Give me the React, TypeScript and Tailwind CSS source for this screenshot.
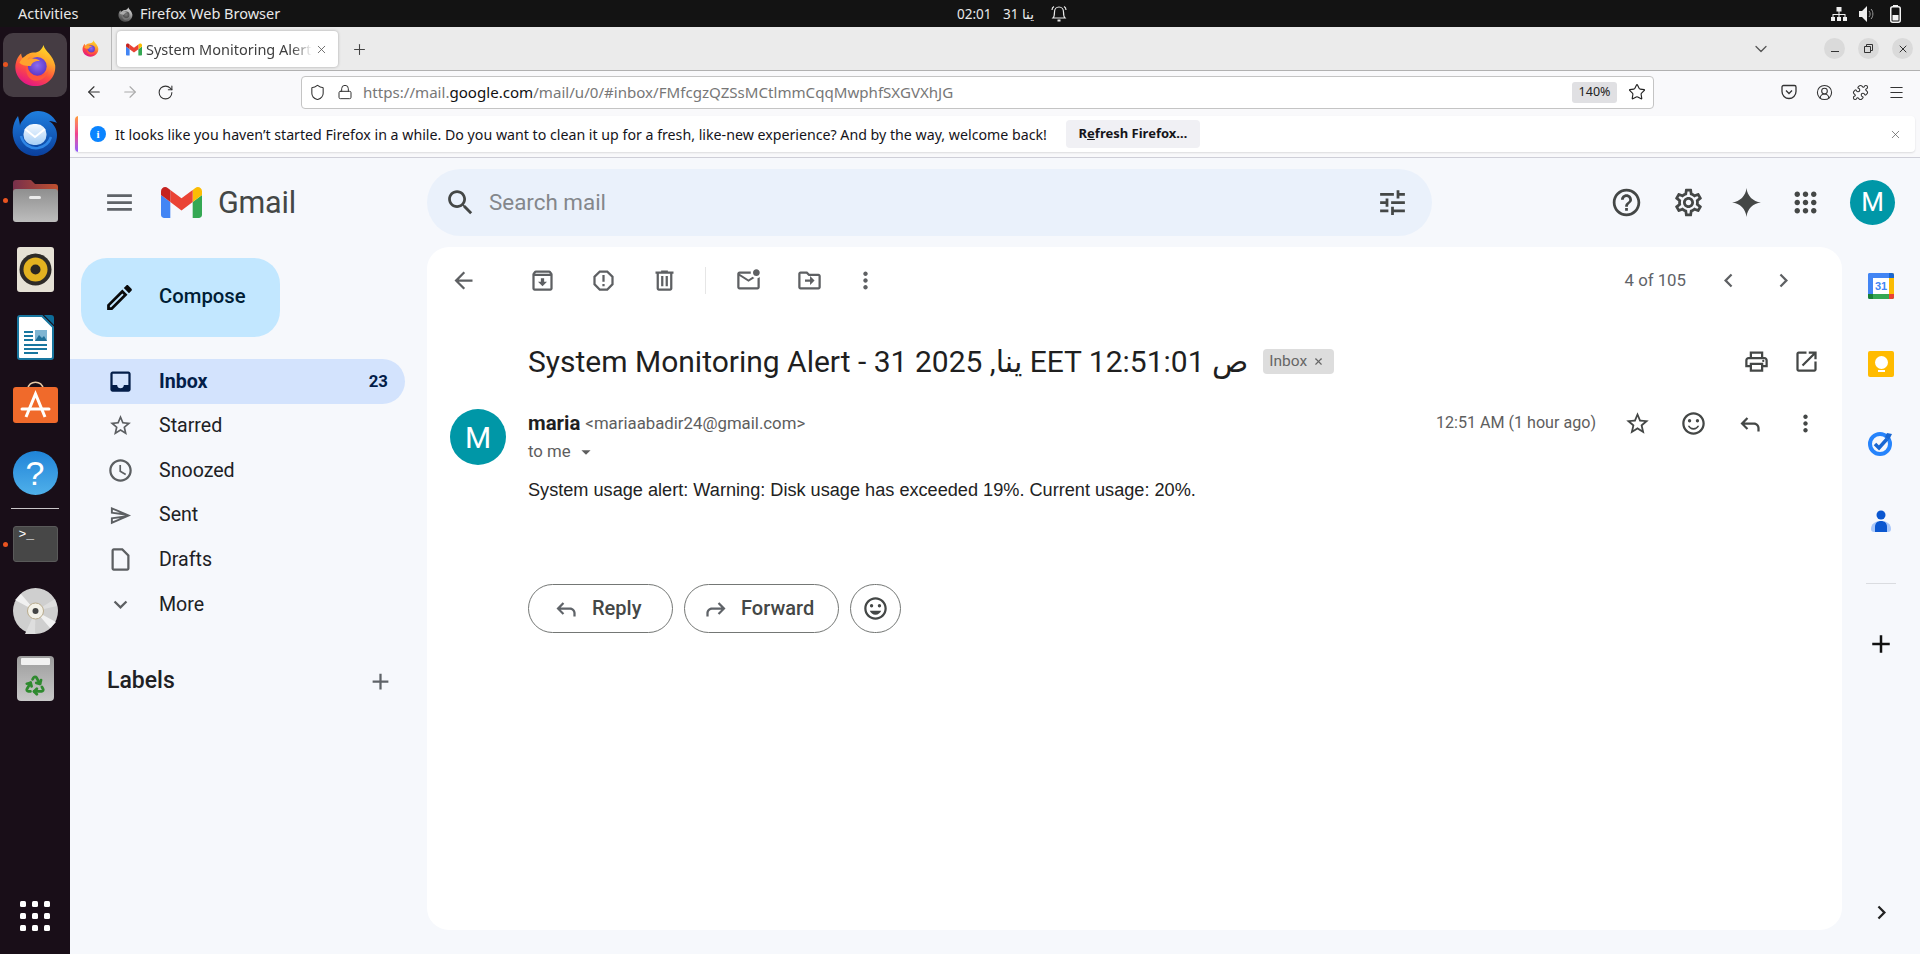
import React from "react";
import { ArrowLeft, ArrowRight, RotateCw, Shield, Lock, Star, CircleUserRound, Puzzle, Menu, X, Plus, ChevronDown, Recycle } from "lucide-react";

const P: Record<string, React.ReactNode> = {
  menu: <path d="M3 18h18v-2H3v2zm0-5h18v-2H3v2zm0-7v2h18V6H3z" />,
  search: <path d="M15.5 14h-.79l-.28-.27C15.41 12.59 16 11.11 16 9.5 16 5.91 13.09 3 9.5 3S3 5.91 3 9.5 5.91 16 9.5 16c1.61 0 3.09-.59 4.23-1.57l.27.28v.79l5 4.99L20.49 19l-4.99-5zm-6 0C7.01 14 5 11.99 5 9.5S7.01 5 9.5 5 14 7.01 14 9.5 11.99 14 9.5 14z" />,
  tune: <path d="M3 17v2h6v-2H3zM3 5v2h10V5H3zm10 16v-2h8v-2h-8v-2h-2v6h2zM7 9v2H3v2h4v2h2V9H7zm14 4v-2H11v2h10zm-6-4h2V7h4V5h-4V3h-2v6z" />,
  help: <path d="M11 18h2v-2h-2v2zm1-16C6.48 2 2 6.48 2 12s4.48 10 10 10 10-4.48 10-10S17.52 2 12 2zm0 18c-4.41 0-8-3.59-8-8s3.59-8 8-8 8 3.59 8 8-3.59 8-8 8zm0-14c-2.21 0-4 1.79-4 4h2c0-1.1.9-2 2-2s2 .9 2 2c0 2-3 1.75-3 5h2c0-2.25 3-2.5 3-5 0-2.21-1.79-4-4-4z" />,
  settings: <path d="M19.43 12.98c.04-.32.07-.64.07-.98 0-.34-.03-.66-.07-.98l2.11-1.65c.19-.15.24-.42.12-.64l-2-3.46c-.09-.16-.26-.25-.44-.25-.06 0-.12.01-.17.03l-2.49 1c-.52-.4-1.08-.73-1.69-.98l-.38-2.65C14.46 2.18 14.25 2 14 2h-4c-.25 0-.46.18-.49.42l-.38 2.65c-.61.25-1.17.59-1.69.98l-2.49-1c-.06-.02-.12-.03-.18-.03-.17 0-.34.09-.43.25l-2 3.46c-.13.22-.07.49.12.64l2.11 1.65c-.04.32-.07.65-.07.98 0 .33.03.66.07.98l-2.11 1.65c-.19.15-.24.42-.12.64l2 3.46c.09.16.26.25.44.25.06 0 .12-.01.17-.03l2.49-1c.52.4 1.08.73 1.69.98l.38 2.65c.03.24.24.42.49.42h4c.25 0 .46-.18.49-.42l.38-2.65c.61-.25 1.17-.59 1.69-.98l2.49 1c.06.02.12.03.18.03.17 0 .34-.09.43-.25l2-3.46c.12-.22.07-.49-.12-.64l-2.11-1.65zm-1.98-1.71c.04.31.05.52.05.73 0 .21-.02.43-.05.73l-.14 1.13.89.7 1.08.84-.7 1.21-1.27-.51-1.04-.42-.9.68c-.43.32-.84.56-1.25.73l-1.06.43-.16 1.13-.2 1.35h-1.4l-.19-1.35-.16-1.13-1.06-.43c-.43-.18-.83-.41-1.23-.71l-.91-.7-1.06.43-1.27.51-.7-1.21 1.08-.84.89-.7-.14-1.13c-.03-.31-.05-.54-.05-.74s.02-.43.05-.73l.14-1.13-.89-.7-1.08-.84.7-1.21 1.27.51 1.04.42.9-.68c.43-.32.84-.56 1.25-.73l1.06-.43.16-1.13.2-1.35h1.39l.19 1.35.16 1.13 1.06.43c.43.18.83.41 1.23.71l.91.7 1.06-.43 1.27-.51.7 1.21-1.07.85-.89.7.14 1.13zM12 8c-2.21 0-4 1.79-4 4s1.79 4 4 4 4-1.79 4-4-1.79-4-4-4zm0 6c-1.1 0-2-.9-2-2s.9-2 2-2 2 .9 2 2-.9 2-2 2z" />,
  spark: <path d="M12 1.5c.6 5.8 4.7 9.9 10.5 10.5-5.8.6-9.9 4.7-10.5 10.5C11.4 16.7 7.3 12.600 1.500 12 7.300 11.400 11.400 7.300 12 1.500z" />,
  apps: <path d="M6 8c1.100 0 2-.9 2-2s-.9-2-2-2-2 .9-2 2 .9 2 2 2zm6 12c1.100 0 2-.9 2-2s-.9-2-2-2-2 .9-2 2 .9 2 2 2zm-6 0c1.100 0 2-.9 2-2s-.9-2-2-2-2 .9-2 2 .9 2 2 2zm0-6c1.100 0 2-.9 2-2s-.9-2-2-2-2 .9-2 2 .9 2 2 2zm6 0c1.100 0 2-.9 2-2s-.9-2-2-2-2 .9-2 2 .9 2 2 2zm4-8c0 1.100.9 2 2 2s2-.9 2-2-.9-2-2-2-2 .9-2 2zm-4 2c1.100 0 2-.9 2-2s-.9-2-2-2-2 .9-2 2 .9 2 2 2zm6 6c1.100 0 2-.9 2-2s-.9-2-2-2-2 .9-2 2 .9 2 2 2zm0 6c1.100 0 2-.9 2-2s-.9-2-2-2-2 .9-2 2 .9 2 2 2z" />,
  back: <path d="M20 11H7.830l5.590-5.590L12 4l-8 8 8 8 1.410-1.410L7.830 13H20v-2z" />,
  archive: <path d="M20.540 5.230l-1.390-1.680C18.880 3.210 18.470 3 18 3H6c-.47 0-.88.21-1.160.55L3.460 5.230C3.170 5.570 3 6.020 3 6.500V19c0 1.100.9 2 2 2h14c1.100 0 2-.9 2-2V6.500c0-.48-.17-.93-.46-1.270zM6.240 5h11.520l.81.97H5.440l.8-.97zM5 19V8h14v11H5zm8.450-9h-2.900v3H8l4 4 4-4h-2.550z" />,
  report: <path d="M15.730 3H8.270L3 8.270v7.460L8.270 21h7.460L21 15.730V8.270L15.730 3zM19 14.900L14.900 19H9.100L5 14.900V9.100L9.100 5h5.800L19 9.100v5.800zM11 7h2v6h-2zM11 15h2v2h-2z" />,
  trash: <path d="M15 4V3H9v1H4v2h1v13c0 1.100.9 2 2 2h10c1.100 0 2-.9 2-2V6h1V4h-5zm2 15H7V6h10v13zM9 8h2v9H9zm4 0h2v9h-2z" />,
  unread: <path d="M22 8.980V18c0 1.100-.9 2-2 2H4c-1.100 0-2-.9-2-2V6c0-1.100.9-2 2-2h10.100c-.06.32-.1.66-.1 1s.04.68.1 1H4l8 5 3.670-2.290c.47.43 1.020.76 1.630.98L12 13 4 8v10h16V9.900c.74-.15 1.420-.48 2-.92zM16 5c0 1.660 1.340 3 3 3s3-1.340 3-3-1.340-3-3-3-3 1.340-3 3z" />,
  move: <path d="M20 6h-8l-2-2H4c-1.100 0-1.990.9-1.990 2L2 18c0 1.100.9 2 2 2h16c1.100 0 2-.9 2-2V8c0-1.100-.9-2-2-2zm0 12H4V6h5.170l2 2H20v10zm-7.500-2l4-4-4-4v3H8v2h4.500v3z" />,
  more: <path d="M12 8c1.100 0 2-.9 2-2s-.9-2-2-2-2 .9-2 2 .9 2 2 2zm0 2c-1.100 0-2 .9-2 2s.9 2 2 2 2-.9 2-2-.9-2-2-2zm0 6c-1.100 0-2 .9-2 2s.9 2 2 2 2-.9 2-2-.9-2-2-2z" />,
  prev: <path d="M15.410 7.410L14 6l-6 6 6 6 1.410-1.410L10.830 12z" />,
  next: <path d="M10 6L8.590 7.410 13.170 12l-4.580 4.590L10 18l6-6z" />,
  print: <path d="M19 8h-1V3H6v5H5c-1.660 0-3 1.340-3 3v6h4v4h12v-4h4v-6c0-1.660-1.340-3-3-3zM8 5h8v3H8V5zm8 14H8v-4h8v4zm4-4h-2v-2H6v2H4v-4c0-.55.45-1 1-1h14c.55 0 1 .45 1 1v4zM18 10.500a1 1 0 1 1 0 2 1 1 0 0 1 0-2z" />,
  open: <path d="M19 19H5V5h7V3H5c-1.110 0-2 .9-2 2v14c0 1.100.89 2 2 2h14c1.100 0 2-.9 2-2v-7h-2v7zM14 3v2h3.590l-9.830 9.830 1.410 1.410L19 6.410V10h2V3h-7z" />,
  star: <path d="M22 9.240l-7.190-.62L12 2 9.190 8.630 2 9.240l5.460 4.730L5.820 21 12 17.270 18.180 21l-1.630-7.030L22 9.240zM12 15.400l-3.760 2.270 1-4.280-3.320-2.880 4.380-.38L12 6.100l1.710 4.040 4.380.38-3.320 2.880 1 4.280L12 15.400z" />,
  smile: <path d="M11.990 2C6.470 2 2 6.480 2 12s4.470 10 9.990 10C17.520 22 22 17.520 22 12S17.520 2 11.990 2zM12 20c-4.420 0-8-3.580-8-8s3.580-8 8-8 8 3.580 8 8-3.580 8-8 8zM8.500 8a1.500 1.500 0 1 1 0 3 1.500 1.500 0 0 1 0-3zm7 0a1.500 1.500 0 1 1 0 3 1.500 1.500 0 0 1 0-3zM12 16c-1.500 0-2.800-.8-3.500-2H6.900c.8 2.100 2.800 3.500 5.100 3.500s4.300-1.400 5.100-3.500h-1.600c-.7 1.200-2 2-3.500 2z" />,
  smileFill: <path d="M11.990 2C6.470 2 2 6.480 2 12s4.470 10 9.990 10C17.520 22 22 17.520 22 12S17.520 2 11.990 2zM12 20c-4.420 0-8-3.580-8-8s3.580-8 8-8 8 3.580 8 8-3.580 8-8 8zM8.500 8a1.500 1.500 0 1 1 0 3 1.500 1.500 0 0 1 0-3zm7 0a1.500 1.500 0 1 1 0 3 1.500 1.500 0 0 1 0-3zM12 17.500c2.330 0 4.300-1.460 5.110-3.500H6.890c.8 2.040 2.780 3.500 5.110 3.500z" />,
  reply: <path d="M9.500 6.400L4 12l5.500 5.600 1.400-1.400L7.700 13H16c1.650 0 3 1.350 3 3v3h2v-3c0-2.760-2.240-5-5-5H7.700l3.200-3.200z" />,
  forward: <path d="M14.500 6.400L20 12l-5.500 5.600-1.400-1.400 3.200-3.200H8c-1.650 0-3 1.350-3 3v3H3v-3c0-2.760 2.240-5 5-5h8.300l-3.200-3.200z" />,
  clock: <path d="M11.990 2C6.470 2 2 6.480 2 12s4.470 10 9.990 10C17.520 22 22 17.520 22 12S17.520 2 11.990 2zM12 20c-4.420 0-8-3.580-8-8s3.580-8 8-8 8 3.580 8 8-3.580 8-8 8zM12.500 7H11v6l5.250 3.150.75-1.230-4.500-2.670z" />,
  send: <path d="M4.010 6.030l7.510 3.220-7.520-1 .01-2.220m7.500 8.720L4 17.970v-2.220l7.510-1M2.010 3L2 10l15 2-15 2 .01 7L23 12 2.010 3z" />,
  draft: <path d="M14 2H6c-1.100 0-2 .9-2 2v16c0 1.100.9 2 2 2h12c1.100 0 2-.9 2-2V8l-6-6zm4 18H6V4h7.170L18 8.830V20z" />,
  expand: <path d="M16.590 8.590L12 13.170 7.410 8.590 6 10l6 6 6-6z" />,
  plus: <path d="M19 13h-6v6h-2v-6H5v-2h6V5h2v6h6v2z" />,
  inbox: <path d="M19 3H5c-1.100 0-2 .9-2 2v14c0 1.100.9 2 2 2h14c1.100 0 2-.9 2-2V5c0-1.100-.9-2-2-2zm0 12h-4c0 1.660-1.350 3-3 3s-3-1.340-3-3H5V5h14v10z" />,
  pencil: <path d="M3 17.250V21h3.750L17.810 9.940l-3.750-3.750L3 17.250zM5.920 19H5v-.92l9.060-9.060.92.92L5.920 19zM20.710 5.630l-2.340-2.340c-.39-.39-1.020-.39-1.410 0l-1.830 1.830 3.750 3.750 1.830-1.830c.39-.39.39-1.020 0-1.410z" />,
  caret: <path d="M7 10l5 5 5-5z" />,
};

function I({ n, s = 27, c = "#444746", cls = "" }: { n: string; s?: number; c?: string; cls?: string }) {
  return (
    <svg width={s} height={s} viewBox="0 0 24 24" fill={c} className={"shrink-0 block " + cls}>
      {P[n]}
    </svg>
  );
}

function GmailLogo({ w = 41, h = 31 }: { w?: number; h?: number }) {
  return (
    <svg width={w} height={h} viewBox="52 42 88 66" className="shrink-0 block">
      <path fill="#4285f4" d="M58 108h14V74L52 59v43c0 3.320 2.690 6 6 6" />
      <path fill="#34a853" d="M120 108h14c3.320 0 6-2.690 6-6V59l-20 15" />
      <path fill="#fbbc04" d="M120 48v26l20-15v-8c0-7.420-8.470-11.650-14.400-7.200" />
      <path fill="#ea4335" d="M72 74V48l24 18 24-18v26L96 92" />
      <path fill="#c5221f" d="M52 51v8l20 15V48l-5.600-4.200c-5.940-4.450-14.400-.22-14.400 7.200" />
    </svg>
  );
}

function FirefoxLogo({ s = 42, id = "a", cls = "" }: { s?: number; id?: string; cls?: string }) {
  return (
    <svg width={s} height={s} viewBox="0 0 48 48" className={"shrink-0 block " + cls}>
      <defs>
        <linearGradient id={id + "f"} x1="0.8" y1="0" x2="0.35" y2="1">
          <stop offset="0" stopColor="#ffe226" />
          <stop offset="0.35" stopColor="#ffa52c" />
          <stop offset="0.65" stopColor="#ff4f3e" />
          <stop offset="1" stopColor="#e31587" />
        </linearGradient>
        <radialGradient id={id + "p"} cx="0.5" cy="0.45" r="0.6">
          <stop offset="0" stopColor="#8c6cf0" />
          <stop offset="1" stopColor="#5a33c4" />
        </radialGradient>
      </defs>
      <path fill={"url(#" + id + "f)"} d="M33 1C34 8 44 12 46 24C47 37 37 47 24 47C11 47 1.500 37 1.500 26C1.500 20 4 14 8 10.500C8 13 9 15 10.500 16.500C13 11.500 18 9.500 23 9.500C27 9.500 31 6.500 33 1Z" />
      <circle cx="26" cy="25" r="10.500" fill={"url(#" + id + "p)"} />
      <path fill="#ffa22e" d="M6 21C9 14.500 15 11 22 12C18.500 13 16 15 15 17.500C19 15.500 25 16 29 19C24 18.500 20 20.500 19 24.500C14 25 9 24 6 21Z" />
      <path fill="#ff5a3c" d="M14 24C16 31 21 36 28 36C33 36 37 33 38.500 29C37 37 31 41 24.500 41C17 41 12 33 14 24Z" opacity="0.9" />
    </svg>
  );
}

function Thunderbird() {
  return (
    <svg width="48" height="46" viewBox="0 0 48 46" className="block">
      <defs>
        <linearGradient id="tb" x1="0.5" y1="0" x2="0.5" y2="1">
          <stop offset="0" stopColor="#1f7fe0" />
          <stop offset="1" stopColor="#0a3f9c" />
        </linearGradient>
        <linearGradient id="te" x1="0.5" y1="0" x2="0.5" y2="1">
          <stop offset="0" stopColor="#f4f9ff" />
          <stop offset="1" stopColor="#a8cff5" />
        </linearGradient>
      </defs>
      <path fill="url(#tb)" d="M7 6C1 14 0 24 4 33c4 8 12 13 20 13 12 0 22-9 22-21 0-6-3-11-8-14 3 0 6 1 8 2-4-8-11-12-19-12-7 0-12 4-15 9-2 2-3 4-3 6C9 14 8 10 7 6Z" />
      <path d="M10 26c2 8 9 13 17 12 6-1 11-5 13-11" fill="none" stroke="#2f86e6" strokeWidth="2.500" />
      <rect x="12.500" y="14" width="23" height="21" rx="10" fill="url(#te)" />
      <path d="M14 19l10 8 10-8" fill="none" stroke="#ffffff" strokeWidth="2" />
    </svg>
  );
}

function Folder() {
  return (
    <svg width="45" height="42" viewBox="0 0 45 42" className="block">
      <defs>
        <linearGradient id="fd" x1="0" y1="0" x2="1" y2="0">
          <stop offset="0" stopColor="#77304c" />
          <stop offset="1" stopColor="#c0502f" />
        </linearGradient>
        <linearGradient id="fb" x1="0" y1="0" x2="0" y2="1">
          <stop offset="0" stopColor="#8f8f8f" />
          <stop offset="1" stopColor="#bdbdbd" />
        </linearGradient>
      </defs>
      <path fill="url(#fd)" d="M0 3a3 3 0 0 1 3-3h15l4 4h20a3 3 0 0 1 3 3v8H0Z" />
      <rect x="0" y="9" width="45" height="33" rx="3" fill="url(#fb)" />
      <rect x="16" y="16" width="12" height="3" rx="1.500" fill="#ececec" />
    </svg>
  );
}

function Rhythmbox() {
  return (
    <svg width="37" height="45" viewBox="0 0 37 45" className="block">
      <rect width="37" height="45" rx="3" fill="#e6e1d5" />
      <circle cx="18.500" cy="22.500" r="16" fill="#2e2b28" />
      <circle cx="18.500" cy="22.500" r="12" fill="#e3b220" />
      <circle cx="18.500" cy="22.500" r="5" fill="#2a2622" />
    </svg>
  );
}

function Writer() {
  return (
    <svg width="37" height="45" viewBox="0 0 37 45" className="block">
      <path fill="#0e6c99" d="M27 0h7a3 3 0 0 1 3 3v7Z" />
      <path fill="#fff" stroke="#18769f" strokeWidth="2" d="M1 3a2 2 0 0 1 2-2h22l11 11v30a2 2 0 0 1-2 2H3a2 2 0 0 1-2-2Z" />
      <path fill="#18769f" d="M7 16h9v2H7zM7 20h9v2H7zM7 24h9v2H7zM7 29h23v2H7zM7 33h23v2H7zM7 37h14v2H7z" />
      <rect x="18" y="15" width="12" height="11" fill="#7fb5d2" />
      <path fill="#1f6f97" d="M18 26l4-6 3 3 2-2 3 5Z" />
    </svg>
  );
}

function Software() {
  return (
    <svg width="45" height="42" viewBox="0 0 45 42" className="block">
      <path d="M15 8c0-9 15-9 15 0" fill="none" stroke="#e9c9a5" strokeWidth="1.500" />
      <rect x="0" y="6" width="45" height="36" rx="3" fill="#f06a2b" />
      <path d="M13 36L22.500 13L32 36" fill="none" stroke="#fff" strokeWidth="3" />
      <path d="M9 28h27" fill="none" stroke="#fff" strokeWidth="3" strokeLinecap="round" />
    </svg>
  );
}

function Help() {
  return (
    <div className="w-[45px] h-[44px] rounded-[50%] bg-gradient-to-b from-[#1f84d8] to-[#4fb0ea] flex items-center justify-center text-white text-[34px] leading-none font-['Liberation_Sans',sans-serif]">
      ?
    </div>
  );
}

function Terminal() {
  return (
    <div className="w-[45px] h-[36px] rounded-[3px] bg-[#474747] border border-[#5a5a5a] pl-[5px] text-white text-[13px] leading-[13px] pt-[1px] font-['Liberation_Mono',monospace]">
      &gt;_
    </div>
  );
}

function Cd() {
  return (
    <svg width="45" height="46" viewBox="0 0 45 46" className="block">
      <ellipse cx="22.500" cy="23" rx="22.500" ry="23" fill="#cfcfcf" />
      <path d="M22.500 23L2 12l6-6ZM22.500 23L43 34l-6 6Z" fill="#f1f1f1" />
      <path d="M22.500 23L22 46h-10ZM22.500 23L44 18l-2-7Z" fill="#dedede" />
      <circle cx="22.500" cy="23" r="8" fill="#f3f1e8" stroke="#b9ab8d" />
      <circle cx="22.500" cy="23" r="3" fill="#444" />
    </svg>
  );
}

function TrashBin() {
  return (
    <div className="relative w-[37px] h-[45px] rounded-[4px] bg-gradient-to-b from-[#9c9c9c] to-[#c9c9c9] flex items-end justify-center pb-[5px]">
      <div className="absolute left-[4px] right-[4px] top-[2px] h-[7px] bg-[#f1f1f1] rounded-[1px]" />
      <Recycle size={22} color="#2f8a2f" strokeWidth={3} />
    </div>
  );
}

function Dock() {
  return (
    <aside className="w-[70px] shrink-0 bg-[#190e18] flex flex-col items-center pt-[6px] pb-[23px] relative">
      <div className="w-[64px] h-[64px] rounded-[10px] bg-[#453c43] flex items-center justify-center">
        <FirefoxLogo id="d" s={43} />
      </div>
      <div className="mt-[13px] h-[46px] flex items-center"><Thunderbird /></div>
      <div className="mt-[24px]"><Folder /></div>
      <div className="mt-[25px]"><Rhythmbox /></div>
      <div className="mt-[23px]"><Writer /></div>
      <div className="mt-[21px]"><Software /></div>
      <div className="mt-[28px]"><Help /></div>
      <div className="mt-[13px] w-[48px] h-px bg-[#c9c6c8]" />
      <div className="mt-[17px]"><Terminal /></div>
      <div className="mt-[26px]"><Cd /></div>
      <div className="mt-[22px]"><TrashBin /></div>
      <div className="mt-auto grid grid-cols-3 gap-[6px]">
        {Array.from({ length: 9 }).map((_, i) => (
          <span key={i} className="w-[6px] h-[6px] rounded-[1.5px] bg-white" />
        ))}
      </div>
      <span className="absolute left-[3px] top-[35px] w-[5px] h-[5px] rounded-full bg-[#e95420]" />
      <span className="absolute left-[3px] top-[171px] w-[5px] h-[5px] rounded-full bg-[#e95420]" />
      <span className="absolute left-[3px] top-[515px] w-[5px] h-[5px] rounded-full bg-[#e95420]" />
    </aside>
  );
}

function TopBar() {
  return (
    <header className="h-[27px] shrink-0 bg-[#131313] text-[#e8e8e8] flex items-center pt-[1px] text-[14.500px] font-['Noto_Sans','DejaVu_Sans',sans-serif]">
      <span className="ml-[18px] w-[100px]">Activities</span>
      <FirefoxLogo id="t" s={15} cls="grayscale" />
      <span className="ml-[7px] w-[817px]">Firefox Web Browser</span>
      <span className="w-[46px] text-[13.500px]">02:01</span>
      <span className="text-[13.500px]">31 ينا</span>
      <svg width="16" height="18" viewBox="0 0 16 18" fill="none" stroke="#e8e8e8" strokeWidth="1.200" className="ml-[17px] shrink-0">
        <path d="M2 13c1.500-1.500 1.500-3 1.500-6S5.500 2 8 2s4.500 2 4.500 5 0 4.500 1.500 6ZM1 5c0-1.500 1-3 2-3.500M15 5c0-1.500-1-3-2-3.500" />
        <path d="M6.500 15.500h3" strokeWidth="2" />
      </svg>
      <div className="ml-auto mr-[19px] flex items-center">
        <svg width="16" height="15" viewBox="0 0 16 15" fill="#eee" className="block">
          <path d="M5.500 0h5v4.500h-5zM7.500 4.500h1V7h6v3h-1V8h-5v2h-1V8h-5v2h-1V7h6zM0 10h4v4H0zM6 10h4v4H6zM12 10h4v4h-4z" />
        </svg>
        <svg width="15" height="16" viewBox="0 0 15 16" fill="#eee" className="block ml-[12px]">
          <path d="M0 5h3l5-5v16l-5-5H0Z" />
          <path d="M10 5c1.500 1.500 1.500 4.500 0 6M12 3c2.500 2.500 2.500 7.500 0 10" stroke="#999" fill="none" />
        </svg>
        <svg width="11" height="18" viewBox="0 0 11 18" className="block ml-[16px]">
          <rect x="3" y="0" width="5" height="2" fill="#f2f2f2" />
          <rect x="0.750" y="1.750" width="9.500" height="15.500" rx="2" fill="none" stroke="#f2f2f2" strokeWidth="1.500" />
          <rect x="2.500" y="10" width="6" height="5.500" fill="#f2f2f2" />
        </svg>
      </div>
    </header>
  );
}

function TabBar() {
  return (
    <div className="h-[44px] shrink-0 bg-[#ebebeb] border-b border-[#b1b1b1] flex items-center font-['Noto_Sans',sans-serif]">
      <div className="w-[42px] h-[43px] border-r border-[#b8b8b8] flex items-center justify-center">
        <FirefoxLogo id="v" s={17} />
      </div>
      <div className="ml-[5px] mt-[1px] w-[221px] h-[36px] bg-white rounded-[4px] shadow-[0_0_3px_rgba(0,0,0,0.3)] flex items-center pl-[9px] relative">
        <GmailLogo w={16} h={13} />
        <span className="ml-[4px] w-[166px] pt-[1px] overflow-hidden whitespace-nowrap text-[14.500px] text-[#404040] [mask-image:linear-gradient(to_right,black_88%,transparent)]">System Monitoring Alert -</span>
        <X size={13} color="#555" strokeWidth={1.500} className="absolute left-[198px] top-[12px]" />
      </div>
      <Plus size={17} color="#444" strokeWidth={1.500} className="ml-[13px] mt-[1px]" />
      <ChevronDown size={20} color="#555" strokeWidth={1.500} className="ml-auto mr-[2px]" />
      <div className="ml-[51px] mr-[7px] flex items-center gap-[13px]">
        <span className="w-[21px] h-[21px] rounded-full bg-[#dadada] flex items-center justify-center">
          <span className="mt-[6px] w-[8px] h-[1.500px] bg-[#333]" />
        </span>
        <span className="w-[21px] h-[21px] rounded-full bg-[#dadada] flex items-center justify-center">
          <svg width="9" height="9" viewBox="0 0 9 9" fill="none" stroke="#333" className="block"><path d="M.5 2.500h6v6h-6zM2.500 2.500v-2h6v6h-2" /></svg>
        </span>
        <span className="w-[21px] h-[21px] rounded-full bg-[#dadada] flex items-center justify-center">
          <X size={12} color="#333" strokeWidth={2} />
        </span>
      </div>
    </div>
  );
}

function NavBar() {
  return (
    <div className="h-[45px] shrink-0 bg-[#f9f9fb] flex items-center pb-[3px] font-['Noto_Sans',sans-serif]">
      <ArrowLeft size={18} color="#333" strokeWidth={1.500} className="ml-[15px]" />
      <ArrowRight size={18} color="#aaa" strokeWidth={1.500} className="ml-[18px]" />
      <RotateCw size={17} color="#333" strokeWidth={1.500} className="ml-[18px]" />
      <div className="ml-[127px] h-[33px] w-[1353px] bg-white border border-[#c4c4c4] rounded-[4px] flex items-center">
        <Shield size={17} color="#333" strokeWidth={1.500} className="ml-[7px]" />
        <Lock size={16} color="#333" strokeWidth={1.500} className="ml-[11px]" />
        <span className="ml-[10px] text-[15.100px] text-[#777] whitespace-nowrap">
          https://mail.<span className="text-[#111]">google.com</span>/mail/u/0/#inbox/FMfcgzQZSsMCtlmmCqqMwphfSXGVXhJG
        </span>
        <span className="ml-auto w-[45px] h-[21px] rounded-[3px] bg-[#e0e0e3] text-[12.500px] text-[#222] flex items-center justify-center">140%</span>
        <Star size={18} color="#222" strokeWidth={1.500} className="ml-[11px] mr-[7px]" />
      </div>
      <svg width="16" height="16" viewBox="0 0 16 16" fill="none" stroke="#333" strokeWidth="1.300" className="ml-[127px] shrink-0">
        <path d="M2.500 1.500h11a1.500 1.500 0 0 1 1.500 1.500v4.500a7 7 0 0 1-14 0V3a1.500 1.500 0 0 1 1.500-1.500Z" />
        <path d="M5 6.500l3 3 3-3" />
      </svg>
      <CircleUserRound size={17} color="#333" strokeWidth={1.500} className="ml-[19px]" />
      <Puzzle size={17} color="#333" strokeWidth={1.500} className="ml-[19px]" />
      <Menu size={17} color="#333" strokeWidth={1.500} className="ml-[19px]" />
    </div>
  );
}

function Notice() {
  return (
    <div className="h-[42px] shrink-0 bg-[#f9f9fb] border-b border-[#cfcfd8] pl-[5px] pr-[5px] font-['Noto_Sans',sans-serif]">
      <div className="h-[36px] bg-white rounded-[4px] shadow-[0_1px_2px_rgba(0,0,0,0.12)] flex items-center relative overflow-hidden">
        <span className="absolute left-0 top-0 bottom-0 w-[3px] bg-gradient-to-b from-[#ff9a2e] via-[#f0408e] to-[#9059ff]" />
        <span className="ml-[15px] w-[16px] h-[16px] rounded-full bg-[#0a84ff] text-white text-[11px] font-bold leading-[16px] text-center font-['Liberation_Serif',serif] shrink-0">i</span>
        <span className="ml-[9px] pt-[2px] w-[951px] text-[14.200px] text-[#15141a] whitespace-nowrap">It looks like you haven’t started Firefox in a while. Do you want to clean it up for a fresh, like-new experience? And by the way, welcome back!</span>
        <span className="w-[134px] h-[28px] rounded-[4px] bg-[#f0f0f4] flex items-center justify-center text-[13px] font-bold text-[#15141a]">
          R<span className="underline">e</span>fresh Firefox…
        </span>
        <X size={13} color="#555" strokeWidth={1.300} className="ml-auto mr-[13px]" />
      </div>
    </div>
  );
}

function NavRow({ icon, label, active, count, s = 27 }: { icon: string; label: string; active?: boolean; count?: string; s?: number }) {
  return (
    <div className={"h-[44.6px] w-[335px] flex items-center rounded-r-full " + (active ? "bg-[#d3e3fd] text-[#041e49] font-bold" : "text-[#202124]")}>
      <span className="ml-[37px] w-[27px] flex justify-center">
        <I n={icon} s={s} c={active ? "#041e49" : "#5c5f62"} />
      </span>
      <span className="ml-[25px] text-[19.6px]">{label}</span>
      {count && <span className="ml-auto mr-[17px] text-[16.800px] font-bold">{count}</span>}
    </div>
  );
}

function Tb({ n, cls = "" }: { n: string; cls?: string }) {
  return <I n={n} s={27} c="#5e6063" cls={cls} />;
}

function Calendar() {
  return (
    <div className="relative w-[26px] h-[26px] rounded-[2px] overflow-hidden bg-white">
      <span className="absolute left-0 top-0 bottom-0 w-[5px] bg-[#4285f4]" />
      <span className="absolute left-0 right-0 top-0 h-[5px] bg-[#4285f4]" />
      <span className="absolute right-0 top-0 h-[26px] w-[5px] bg-[#fbbc04]" />
      <span className="absolute right-0 top-0 h-[5px] w-[5px] bg-[#1967d2]" />
      <span className="absolute left-0 right-0 bottom-0 h-[5px] bg-[#34a853]" />
      <span className="absolute left-0 bottom-0 h-[5px] w-[5px] bg-[#188038]" />
      <span className="absolute right-0 bottom-0 h-[5px] w-[5px] bg-[#ea4335]" />
      <span className="absolute inset-0 flex items-center justify-center text-[11px] font-bold text-[#4285f4] font-['Liberation_Sans',sans-serif]">31</span>
    </div>
  );
}

function Keep() {
  return (
    <div className="w-[26px] h-[26px] rounded-[2px] bg-[#ffbb00] flex flex-col items-center justify-center">
      <span className="w-[13px] h-[13px] rounded-full bg-white" />
      <span className="mt-[1px] w-[7px] h-[2px] bg-white" />
    </div>
  );
}

function Tasks() {
  return (
    <svg width="26" height="26" viewBox="0 0 26 26" className="block">
      <circle cx="12" cy="14" r="10" fill="none" stroke="#2684fc" strokeWidth="4" />
      <path d="M7 14l4 4 8-9" fill="none" stroke="#1967d2" strokeWidth="3.500" />
      <path d="M19 3l5 1-3 6-4-3Z" fill="#1967d2" />
    </svg>
  );
}

function Contacts() {
  return (
    <svg width="26" height="26" viewBox="0 0 26 26" className="block">
      <circle cx="13" cy="7" r="4.500" fill="#0b57d0" />
      <path d="M3 21c0-5 4-8 10-8s10 3 10 8c0 2-1 3-3 3H6c-2 0-3-1-3-3Z" fill="#a8c7fa" />
      <path d="M7 24V19c0-4 2.500-6 6-6s6 2 6 6v5Z" fill="#0b57d0" />
    </svg>
  );
}

function Gmail() {
  return (
    <div className="flex-1 min-h-0 bg-[#f6f8fc] flex flex-col font-[Roboto,'DejaVu_Sans',sans-serif]">
      <div className="h-[89px] shrink-0 flex pt-[11px] items-start">
        <div className="w-[357px] h-[67px] flex items-center shrink-0">
          <I n="menu" s={33} c="#5f6368" cls="ml-[33px]" />
          <div className="ml-[25px]"><GmailLogo /></div>
          <span className="ml-[16px] pt-[1px] text-[30.500px] text-[#444746] tracking-[-0.2px]">Gmail</span>
        </div>
        <div className="w-[1005px] h-[67px] rounded-full bg-[#eaf1fb] flex items-center shrink-0">
          <I n="search" s={33} c="#444746" cls="ml-[17px]" />
          <span className="ml-[12px] pt-[1px] text-[22.400px] text-[#84878b]">Search mail</span>
          <I n="tune" s={33} c="#444746" cls="ml-auto mr-[23px]" />
        </div>
        <div className="h-[67px] flex items-center">
          <I n="help" s={33} cls="ml-[178px]" />
          <I n="settings" s={33} cls="ml-[29px]" />
          <I n="spark" s={33} c="#444746" cls="ml-[25px]" />
          <I n="apps" s={33} cls="ml-[26px]" />
          <span className="ml-[28px] w-[45px] h-[45px] rounded-full bg-[#0097a7] text-white text-[26px] flex items-center justify-center">M</span>
        </div>
      </div>
      <div className="flex-1 min-h-0 flex">
        <nav className="w-[357px] shrink-0 pt-[11px]">
          <div className="ml-[11px] w-[199px] h-[79px] rounded-[26px] bg-[#c2e7ff] flex items-center text-[#001d35]">
            <I n="pencil" s={33} c="#0a0a0a" cls="ml-[22px]" />
            <span className="ml-[23px] pb-[2px] text-[20.300px] font-medium">Compose</span>
          </div>
          <div className="mt-[22px]">
            <NavRow icon="inbox" label="Inbox" active count="23" />
            <NavRow icon="star" s={25} label="Starred" />
            <NavRow icon="clock" label="Snoozed" />
            <NavRow icon="send" s={23} label="Sent" />
            <NavRow icon="draft" label="Drafts" />
            <NavRow icon="expand" label="More" />
          </div>
          <div className="mt-[35px] h-[40px] flex items-center w-[335px]">
            <span className="ml-[37px] text-[23px] font-medium text-[#202124]">Labels</span>
            <I n="plus" s={27} c="#5f6368" cls="ml-auto mr-[11px]" />
          </div>
        </nav>
        <main className="flex-1 mb-[24px] bg-white rounded-[22px] min-w-0">
          <div className="h-[67px] flex items-center">
            <Tb n="back" cls="ml-[23px]" />
            <Tb n="archive" cls="ml-[52px]" />
            <Tb n="report" cls="ml-[34px]" />
            <Tb n="trash" cls="ml-[34px]" />
            <span className="ml-[27px] w-px h-[27px] bg-[#e6e6e6]" />
            <Tb n="unread" cls="ml-[29px]" />
            <Tb n="move" cls="ml-[34px]" />
            <Tb n="more" cls="ml-[29px]" />
            <span className="ml-auto text-[16.800px] text-[#5f6368]">4 of 105</span>
            <Tb n="prev" cls="ml-[29px]" />
            <Tb n="next" cls="ml-[28px] mr-[45px]" />
          </div>
          <div className="h-[95px] flex items-center pl-[101px] pr-[22px]">
            <h1 className="text-[30px] font-normal text-[#1f1f1f] whitespace-nowrap">System Monitoring Alert - 31 ينا, 2025 EET 12:51:01 ص</h1>
            <span className="ml-[15px] h-[25px] w-[71px] rounded-[4px] bg-[#dddddd] text-[15.500px] text-[#666] flex items-center pl-[6px]">
              Inbox
              <X size={11} color="#666" strokeWidth={2.500} className="ml-[6px]" />
            </span>
            <I n="print" s={27} cls="ml-auto" />
            <I n="open" s={27} cls="ml-[23px]" />
          </div>
          <div className="flex pl-[23px] pr-[23px]">
            <span className="w-[56px] h-[56px] rounded-full bg-[#0097a7] text-white text-[30px] flex items-center justify-center shrink-0">M</span>
            <div className="ml-[22px] flex-1 min-w-0">
              <div className="h-[29px] flex items-center">
                <span className="text-[20.400px] font-bold text-[#1f1f1f]">maria</span>
                <span className="ml-[5px] text-[16.800px] text-[#5e5e5e]">&lt;mariaabadir24@gmail.com&gt;</span>
                <span className="ml-auto text-[16.100px] text-[#5e5e5e]">12:51 AM (1 hour ago)</span>
                <I n="star" s={27} c="#444746" cls="ml-[28px]" />
                <I n="smile" s={27} c="#444746" cls="ml-[29px]" />
                <I n="reply" s={27} c="#444746" cls="ml-[29px]" />
                <I n="more" s={27} c="#444746" cls="ml-[29px]" />
              </div>
              <div className="h-[28px] flex items-center text-[16.800px] text-[#5e5e5e]">
                to me
                <I n="caret" s={22} c="#5e5e5e" cls="ml-[4px]" />
              </div>
              <p className="h-[49px] flex items-center text-[18.150px] text-[#222] font-['Liberation_Sans',sans-serif]">System usage alert: Warning: Disk usage has exceeded 19%. Current usage: 20%.</p>
              <div className="mt-[69px] flex items-center">
                <span className="w-[145px] h-[49px] rounded-full border border-[#747775] flex items-center text-[#444746] text-[20px] font-medium">
                  <I n="reply" s={27} c="#5f6368" cls="ml-[23px]" />
                  <span className="ml-[13px] pb-[1px]">Reply</span>
                </span>
                <span className="ml-[11px] w-[155px] h-[49px] rounded-full border border-[#747775] flex items-center text-[#444746] text-[20px] font-medium">
                  <I n="forward" s={27} c="#5f6368" cls="ml-[18px]" />
                  <span className="ml-[11px] pb-[1px]">Forward</span>
                </span>
                <span className="ml-[11px] w-[51px] h-[49px] rounded-full border border-[#747775] flex items-center justify-center">
                  <I n="smileFill" s={27} c="#444746" />
                </span>
              </div>
            </div>
          </div>
        </main>
        <aside className="w-[78px] shrink-0 flex flex-col items-center pt-[26px] pb-[28px]">
          <Calendar />
          <div className="mt-[52px]"><Keep /></div>
          <div className="mt-[53px]"><Tasks /></div>
          <div className="mt-[52px]"><Contacts /></div>
          <span className="mt-[49px] w-[30px] h-px bg-[#dadce0]" />
          <I n="plus" s={30} c="#111" cls="mt-[45px]" />
          <I n="next" s={27} c="#222" cls="mt-auto" />
        </aside>
      </div>
    </div>
  );
}

export default function App() {
  return (
    <div className="w-[1920px] h-[954px] overflow-hidden flex flex-col">
      <TopBar />
      <div className="flex-1 min-h-0 flex">
        <Dock />
        <div className="flex-1 min-w-0 flex flex-col">
          <TabBar />
          <NavBar />
          <Notice />
          <Gmail />
        </div>
      </div>
    </div>
  );
}
